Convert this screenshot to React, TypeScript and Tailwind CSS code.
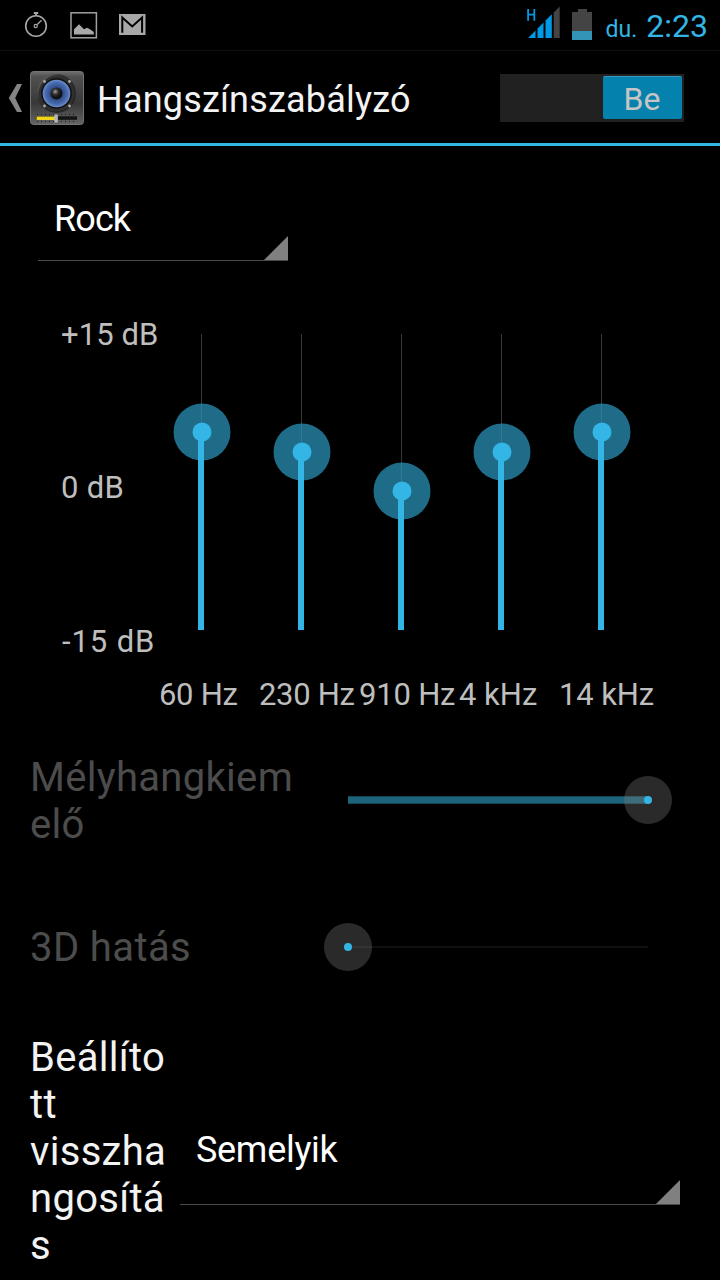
import React, { useState } from 'react'

const bands = [
  { label: '60 Hz', top: 98, spacing: 'tracking-[-0.3px]' },
  { label: '230 Hz', top: 118, spacing: 'tracking-[-0.3px]' },
  { label: '910 Hz', top: 157, spacing: 'tracking-[-0.2px]' },
  { label: '4 kHz', top: 118, spacing: 'tracking-[0px]' },
  { label: '14 kHz', top: 98, spacing: 'tracking-[-0.1px]' },
]

function StatusBar() {
  return (
    <header className="flex h-[51px] items-start border-b border-[#0e0e0e]">
      <svg className="ml-6 mt-3 h-[26px] w-6" viewBox="0 0 24 26" fill="none" stroke="#a8a8a8">
        <circle cx="12" cy="14" r="10.3" strokeWidth="1.6" />
        <path d="M9.8 1h4.4M12 1v3" strokeWidth="1.8" />
        <circle cx="11.7" cy="14" r="1.6" strokeWidth="1.2" />
        <path d="M13 12.7l4.5-4.4" strokeWidth="1.3" />
      </svg>
      <svg className="ml-[22px] mt-3 h-[27px] w-[28px]" viewBox="0 0 28 27">
        <rect x="1" y="0.8" width="25.4" height="25" fill="none" stroke="#a0a0a0" strokeWidth="1.5" />
        <path d="M4 22.5v-5.2l5-5 5 5 3-1.6 2.6 1.3 4.2 3v2.5z" fill="#a8a8a8" />
      </svg>
      <svg className="ml-5 mt-[14px] h-[21px] w-[28px]" viewBox="0 0 28 21">
        <rect x="1" y="0" width="26.5" height="21" fill="#a8a8a8" />
        <path d="M4.3 18.7V3.6l9.9 8.8 9.9-8.8v15.1" fill="none" stroke="#000" strokeWidth="2" />
      </svg>
      <div className="ml-auto flex items-start text-[#33b5e5]">
        <svg className="mt-[6px] h-8 w-[34px]" viewBox="0 0 34 32">
          <path d="M1.1 3v11.8M7.3 3v11.8M1.1 8.7h6.2" fill="none" stroke="#0099e5" strokeWidth="1.8" />
          <path d="M1 32L8.5 24.5V32zM10.5 22.5l6-6V32h-6zM18.5 14.5l6.3-6.3V32h-6.3z" fill="#0099e5" />
          <path d="M26.7 6.5l6-6V32h-6z" fill="#444" />
        </svg>
        <svg className="ml-[11px] mt-[9px] h-[31px] w-5" viewBox="0 0 20 31">
          <path d="M0 3h6V0h9v3h5v19H0z" fill="#444" />
          <path d="M0 22h20v9H0z" fill="#3394b8" />
        </svg>
        <span className="ml-[14px] mt-[16px] text-[23px] leading-[27px]">du.</span>
        <span className="ml-[9px] mr-[12px] mt-[7px] text-[32px] leading-[38px]">2:23</span>
      </div>
    </header>
  )
}

function EqualizerIcon() {
  return (
    <svg className="h-[54px] w-[54px]" viewBox="0 0 54 54">
      <defs>
        <linearGradient id="box" x1="0" y1="0" x2="0" y2="1">
          <stop offset="0" stopColor="#707070" />
          <stop offset="0.1" stopColor="#505050" />
          <stop offset="0.6" stopColor="#383838" />
          <stop offset="1" stopColor="#646464" />
        </linearGradient>
        <linearGradient id="ring" x1="0" y1="0" x2="1" y2="1">
          <stop offset="0" stopColor="#7a7a7a" />
          <stop offset="0.35" stopColor="#303030" />
          <stop offset="1" stopColor="#222" />
        </linearGradient>
        <radialGradient id="cone">
          <stop offset="0.3" stopColor="#243e78" />
          <stop offset="0.8" stopColor="#4a6db0" />
          <stop offset="1" stopColor="#6f8fcc" />
        </radialGradient>
        <radialGradient id="cap" cx="0.4" cy="0.35">
          <stop offset="0" stopColor="#a0a0a0" />
          <stop offset="0.5" stopColor="#303030" />
          <stop offset="1" stopColor="#101010" />
        </radialGradient>
      </defs>
      <rect x="0.5" y="0.5" width="53" height="53" rx="3" fill="url(#box)" stroke="#747474" />
      <circle cx="26.5" cy="22.5" r="19.5" fill="url(#ring)" />
      <circle cx="26.5" cy="22.5" r="17.8" fill="#303030" />
      <circle cx="26.5" cy="22.5" r="15.3" fill="#101010" />
      <circle cx="26.5" cy="22.5" r="13.8" fill="url(#cone)" />
      <circle cx="26.5" cy="22.5" r="6" fill="url(#cap)" />
      <g fill="#aaa">
        <circle cx="14.5" cy="10.5" r="1.4" />
        <circle cx="39.5" cy="10.5" r="1.4" />
        <circle cx="14.5" cy="35" r="1.4" />
        <circle cx="39.5" cy="35" r="1.4" />
      </g>
      <path d="M7 43.5h40M7 50.5h40" stroke="#1c1c1c" strokeWidth="1" strokeDasharray="1 3" />
      <rect x="6" y="45.3" width="41" height="3.5" fill="#151515" />
      <rect x="6.5" y="45.5" width="19" height="3.5" fill="#f0d51c" />
      <rect x="24.3" y="43.5" width="3.6" height="8" fill="#b5b5b5" />
    </svg>
  )
}

function ActionBar({ on, onToggle }: { on: boolean; onToggle: () => void }) {
  return (
    <div className="flex h-[95px] items-start border-b-[3px] border-[#33b5e5]">
      <svg className="ml-2 mt-[33px] h-[28px] w-[14px]" viewBox="0 0 14 28">
        <path d="M9 0h5L7.2 14 14 28H9L0.8 14z" fill="#858585" />
      </svg>
      <div className="ml-2 mt-5"><EqualizerIcon /></div>
      <h1 className="ml-[13px] mt-[28px] text-[36px] leading-[42px] tracking-[0.2px] text-[#f3f3f3]">Hangszínszabályzó</h1>
      <button onClick={onToggle} className={`ml-auto mr-9 mt-[23px] flex h-12 w-[184px] bg-[#212121] px-[2px] pt-[2px] ${on ? 'justify-end' : 'justify-start'}`}>
        <span className="h-[43px] w-[79px] rounded-[2px] border-t border-[#3a9cc0] bg-[#0581ae] pr-px text-center text-[32px] leading-[44px] text-[#c5c5c5]">Be</span>
      </button>
    </div>
  )
}

function Spinner({ value, size }: { value: string; size: string }) {
  return (
    <div className={`relative border-b border-[#4c4c4c] pl-4 text-[36px] leading-[42px] text-white ${size}`}>
      {value}
      <svg className="absolute bottom-0 right-0 h-6 w-6" viewBox="0 0 24 24">
        <path d="M24 0v24H0z" fill="#808080" />
      </svg>
    </div>
  )
}

function Band({ top }: { top: number }) {
  return (
    <div className="relative flex h-[296px] w-[6px]">
      <div className="ml-[3px] h-full w-px bg-[#383838]" />
      <div className="absolute left-1/2 ml-px h-[57px] w-[57px] -translate-x-1/2 -translate-y-1/2 rounded-full bg-[#2990b7]/75" style={{ top }} />
      <div className="absolute bottom-0 w-[6px] bg-[#33b5e5]" style={{ top }} />
      <div className="absolute left-1/2 ml-px h-[19px] w-[19px] -translate-x-1/2 -translate-y-1/2 rounded-full bg-[#33b5e5]" style={{ top }} />
    </div>
  )
}

function DisabledSeek({ full }: { full: boolean }) {
  return (
    <div className="relative flex h-12 w-[300px] items-center">
      {full
        ? <div className="h-2 w-full border-y border-[#164453] bg-[#1d637b]" />
        : <div className="h-[2px] w-full bg-[#0f0f0f]" />}
      <div className={`absolute flex h-12 w-12 items-center justify-center rounded-full bg-[#808080]/33 ${full ? '-right-6' : '-left-6'}`}>
        <div className="h-2 w-2 rounded-full bg-[#33b5e5]" />
      </div>
    </div>
  )
}

export default function App() {
  const [on, setOn] = useState(true)

  return (
    <div className="h-[1280px] w-[720px] overflow-hidden bg-black font-[Roboto,sans-serif]">
      <StatusBar />
      <ActionBar on={on} onToggle={() => setOn(v => !v)} />
      <main>
        <div className="pl-[38px] pt-[52px]">
          <Spinner value="Rock" size="w-[250px] h-[63px] tracking-[-0.9px]" />
        </div>

        <section className="mt-[55px] text-[31px] leading-[38px] text-[#bebebe]">
          <div className="flex">
            <div className="flex h-[345px] w-[138px] flex-col justify-between pl-[61px]">
              <span className="whitespace-nowrap tracking-[0.1px]">+15 dB</span>
              <span className="-mt-px whitespace-nowrap tracking-[0.3px]">0 dB</span>
              <span className="whitespace-nowrap pl-px tracking-[0.9px]">-15 dB</span>
            </div>
            <div className="flex gap-[94px] pl-[60px] pt-[18px]">
              {bands.map(b => <Band key={b.label} top={b.top} />)}
            </div>
          </div>
          <div className="mt-[15px] flex pl-[159px]">
            {bands.map(b => (
              <span key={b.label} className={`w-[100px] whitespace-nowrap ${b.spacing}`}>{b.label}</span>
            ))}
          </div>
        </section>

        <section className="mt-[40px] flex text-[40px] leading-[47px] text-[#4c4c4c]">
          <div className="w-[318px] pl-[30px] tracking-[0.3px]">Mélyhangkiem<br />elő</div>
          <div className="pl-[30px] pt-[22px]"><DisabledSeek full /></div>
        </section>

        <section className="mt-[75px] flex text-[40px] leading-[47px] text-[#4c4c4c]">
          <div className="w-[318px] pl-[30px] pt-px tracking-[0.4px]">3D hatás</div>
          <div className="pl-[30px]"><DisabledSeek full={false} /></div>
        </section>

        <section className="mt-[62px] flex items-start text-[40px] leading-[47px] text-[#f3f3f3]">
          <div className="w-[180px] pl-[30px] pt-px tracking-[0.3px]">Beállíto<br />tt<br />visszha<br />ngosítá<br />s</div>
          <div className="pt-[96px]"><Spinner value="Semelyik" size="w-[500px] h-[76px] tracking-[-0.3px]" /></div>
        </section>
      </main>
    </div>
  )
}
